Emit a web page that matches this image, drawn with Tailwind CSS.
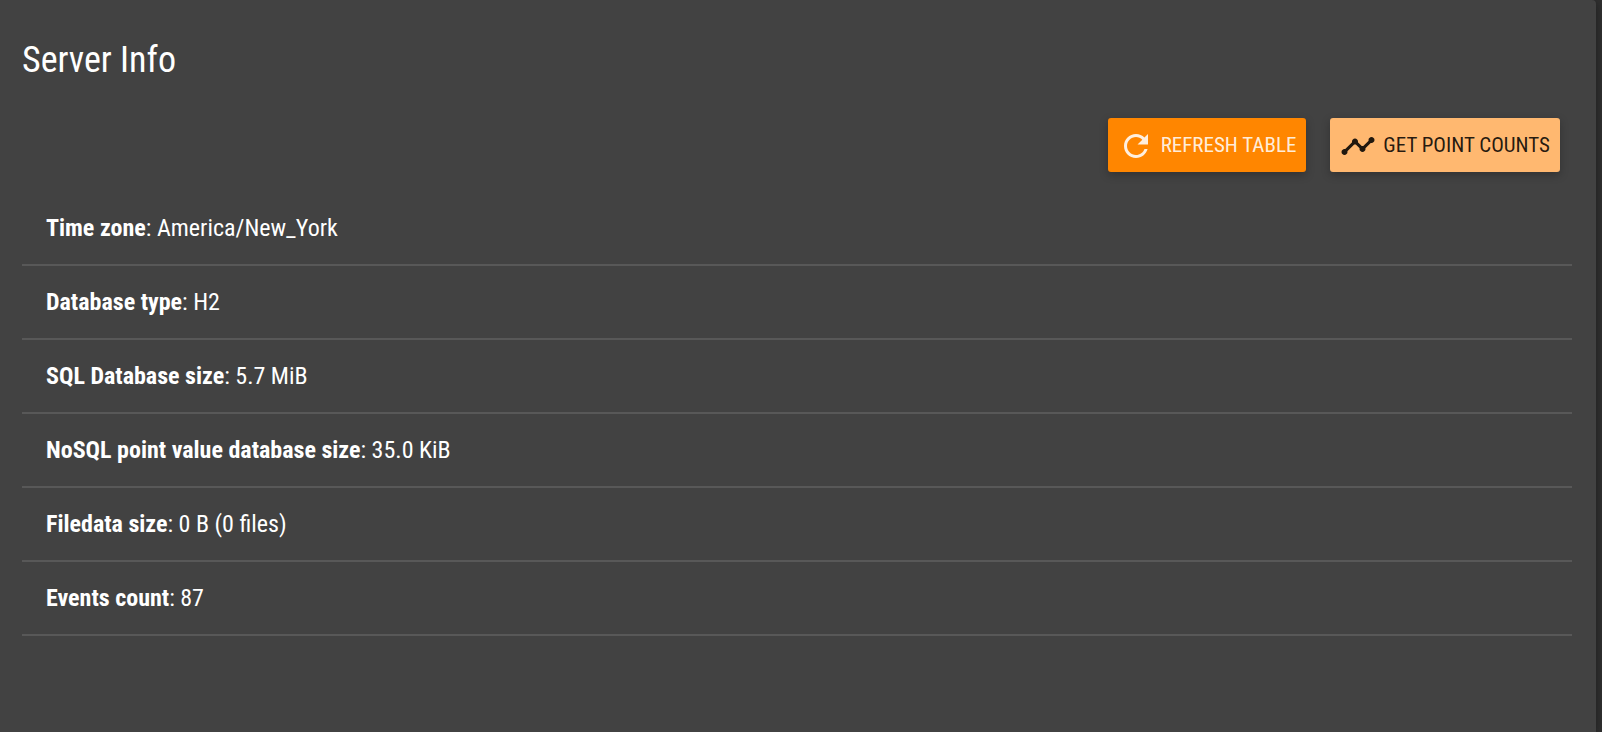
<!DOCTYPE html>
<html lang="en">
<head>
<meta charset="utf-8">
<meta name="viewport" content="width=device-width, initial-scale=1">
<title>Server Info</title>
<script src="https://cdn.jsdelivr.net/npm/@tailwindcss/browser@4"></script>
</head>
<body class="min-h-screen bg-[#303030] pr-1.5 font-['Roboto_Condensed','Liberation_Sans_Narrow',Roboto,sans-serif] text-white">
<main class="min-h-screen rounded-tr-sm bg-[#424242] pl-[22px] pr-6 pt-9 pb-12 shadow-[0_2px_10px_rgba(0,0,0,0.4)]">
  <h1 class="text-[36px] leading-[48px]">Server Info</h1>
  <div class="mt-[34px] flex flex-wrap justify-end gap-6 pr-3">
    <button type="button" class="flex h-[54px] items-center gap-[7px] rounded-[3px] bg-[#ff8600] px-2.5 pt-0.5 text-[21px] text-white/87 uppercase shadow-[0_3px_8px_rgba(0,0,0,0.25)]">
      <svg class="size-9" viewBox="0 0 24 24" fill="currentColor" aria-hidden="true"><path d="M17.65 6.35C16.2 4.9 14.21 4 12 4c-4.42 0-7.99 3.58-7.99 8s3.57 8 7.99 8c3.73 0 6.84-2.55 7.73-6h-2.08c-.82 2.33-3.04 4-5.65 4-3.31 0-6-2.69-6-6s2.69-6 6-6c1.66 0 3.14.69 4.22 1.78L13 11h7V4l-2.35 2.35z"/></svg>
      Refresh table
    </button>
    <button type="button" class="flex h-[54px] items-center gap-[7px] rounded-[3px] bg-[#ffb870] px-2.5 pt-0.5 text-[21px] text-black/87 uppercase shadow-[0_3px_8px_rgba(0,0,0,0.25)]">
      <svg class="size-9" viewBox="0 0 24 24" fill="currentColor" aria-hidden="true"><path d="M23 8c0 1.1-.9 2-2 2-.18 0-.35-.02-.51-.07l-3.56 3.55c.05.16.07.34.07.52 0 1.1-.9 2-2 2s-2-.9-2-2c0-.18.02-.36.07-.52l-2.55-2.55c-.16.05-.34.07-.52.07s-.36-.02-.52-.07l-4.55 4.56c.05.16.07.33.07.51 0 1.1-.9 2-2 2s-2-.9-2-2 .9-2 2-2c.18 0 .35.02.51.07l4.56-4.55C8.02 9.36 8 9.18 8 9c0-1.1.9-2 2-2s2 .9 2 2c0 .18-.02.36-.07.52l2.55 2.55c.16-.05.34-.07.52-.07s.36.02.52.07l3.55-3.56C19.02 8.35 19 8.18 19 8c0-1.1.9-2 2-2s2 .9 2 2z"/></svg>
      Get point counts
    </button>
  </div>
  <ul class="mt-5 text-[24px] leading-8">
    <li class="border-b-2 border-[#585858] px-6 py-5"><b>Time zone</b>: America/New_York</li>
    <li class="border-b-2 border-[#585858] px-6 py-5"><b>Database type</b>: H2</li>
    <li class="border-b-2 border-[#585858] px-6 py-5"><b>SQL Database size</b>: 5.7 MiB</li>
    <li class="border-b-2 border-[#585858] px-6 py-5"><b>NoSQL point value database size</b>: 35.0 KiB</li>
    <li class="border-b-2 border-[#585858] px-6 py-5"><b>Filedata size</b>: 0 B (0 files)</li>
    <li class="border-b-2 border-[#585858] px-6 py-5"><b>Events count</b>: 87</li>
  </ul>
</main>
</body>
</html>
